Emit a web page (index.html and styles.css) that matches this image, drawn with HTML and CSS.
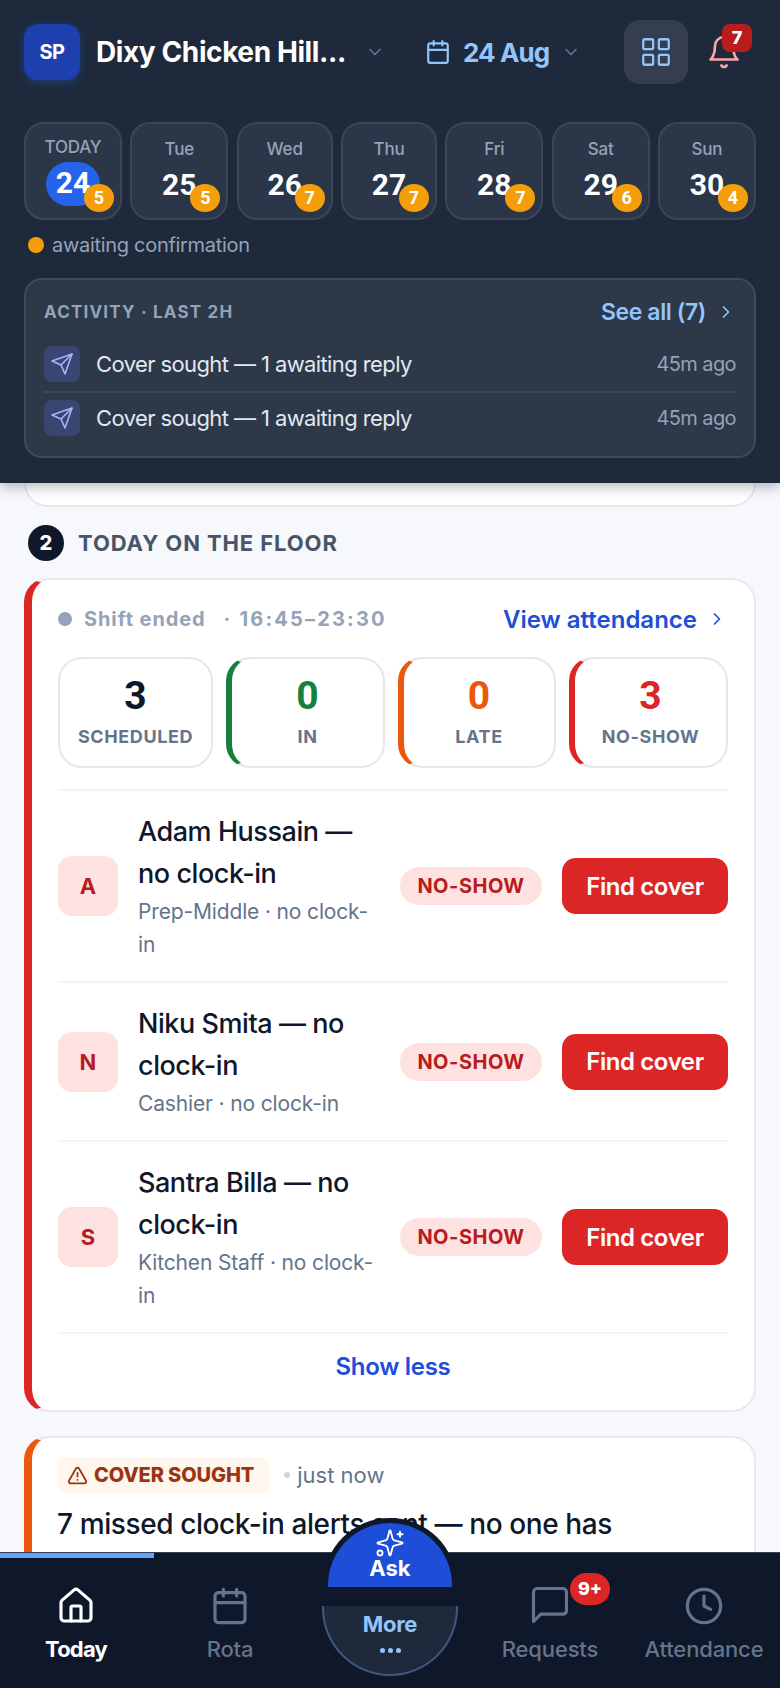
FILE: index.html
```html
<!DOCTYPE html>
<html lang="en">
<head>
    <meta charset="UTF-8">
    <meta name="viewport" content="width=device-width, initial-scale=1.0">
    <title>Today</title>
    <link rel="stylesheet" href="styles.css">
</head>
<body>
<div class="app">
    <header class="top">
        <div class="top-bar">
            <div class="logo">SP</div>
            <div class="site-name">Dixy Chicken Hill...</div>
            <svg class="chev chev-site" viewBox="0 0 24 24"><path d="m6 9 6 6 6-6"/></svg>
            <svg class="date-icon" viewBox="0 0 24 24"><path d="M8 2v4M16 2v4M3 10h18"/><rect x="3" y="4" width="18" height="18" rx="2"/></svg>
            <div class="date-label">24 Aug</div>
            <svg class="chev" viewBox="0 0 24 24"><path d="m6 9 6 6 6-6"/></svg>
            <div class="grid-btn">
                <svg viewBox="0 0 24 24"><rect x="3" y="3" width="7" height="7" rx="1"/><rect x="14" y="3" width="7" height="7" rx="1"/><rect x="14" y="14" width="7" height="7" rx="1"/><rect x="3" y="14" width="7" height="7" rx="1"/></svg>
            </div>
            <div class="bell">
                <svg viewBox="0 0 24 24"><path d="M6 8a6 6 0 0 1 12 0c0 7 3 9 3 9H3s3-2 3-9"/><path d="M10.3 21a1.94 1.94 0 0 0 3.4 0"/></svg>
                <span class="bell-count">7</span>
            </div>
        </div>

        <div class="week">
            <div class="day day-today"><span class="day-name">TODAY</span><span class="day-num">24</span><span class="day-badge">5</span></div>
            <div class="day"><span class="day-name">Tue</span><span class="day-num">25</span><span class="day-badge">5</span></div>
            <div class="day"><span class="day-name">Wed</span><span class="day-num">26</span><span class="day-badge">7</span></div>
            <div class="day"><span class="day-name">Thu</span><span class="day-num">27</span><span class="day-badge">7</span></div>
            <div class="day"><span class="day-name">Fri</span><span class="day-num">28</span><span class="day-badge">7</span></div>
            <div class="day"><span class="day-name">Sat</span><span class="day-num">29</span><span class="day-badge">6</span></div>
            <div class="day"><span class="day-name">Sun</span><span class="day-num">30</span><span class="day-badge">4</span></div>
        </div>

        <div class="legend"><span class="legend-dot"></span>awaiting confirmation</div>

        <section class="activity">
            <div class="activity-head">
                <span class="activity-title">ACTIVITY · LAST 2H</span>
                <span class="see-all">See all (7)</span>
                <svg class="see-chev" viewBox="0 0 24 24"><path d="m9 18 6-6-6-6"/></svg>
            </div>
            <div class="activity-row">
                <span class="activity-icon"><svg viewBox="0 0 24 24"><path d="m22 2-7 20-4-9-9-4Z"/><path d="M22 2 11 13"/></svg></span>
                <span class="activity-text">Cover sought — 1 awaiting reply</span>
                <span class="activity-time">45m ago</span>
            </div>
            <div class="activity-row">
                <span class="activity-icon"><svg viewBox="0 0 24 24"><path d="m22 2-7 20-4-9-9-4Z"/><path d="M22 2 11 13"/></svg></span>
                <span class="activity-text">Cover sought — 1 awaiting reply</span>
                <span class="activity-time">45m ago</span>
            </div>
        </section>
    </header>

    <main class="content">
        <div class="prev-card"></div>

        <div class="section-head">
            <span class="section-num">2</span>
            <h2>TODAY ON THE FLOOR</h2>
        </div>

        <section class="card card-red">
            <div class="shift-row">
                <span class="shift-dot"></span>
                <span class="shift-state">Shift ended</span>
                <span class="shift-time">· 16:45–23:30</span>
                <span class="view-link">View attendance</span>
                <svg class="view-chev" viewBox="0 0 24 24"><path d="m9 18 6-6-6-6"/></svg>
            </div>

            <div class="stats">
                <div class="stat"><b>3</b><span>SCHEDULED</span></div>
                <div class="stat stat-in"><b>0</b><span>IN</span></div>
                <div class="stat stat-late"><b>0</b><span>LATE</span></div>
                <div class="stat stat-noshow"><b>3</b><span>NO-SHOW</span></div>
            </div>

            <div class="person">
                <div class="avatar">A</div>
                <div class="person-info">
                    <div class="person-name">Adam Hussain — no clock-in</div>
                    <div class="person-sub">Prep-Middle · no clock-in</div>
                </div>
                <span class="pill">NO-SHOW</span>
                <button class="cover-btn">Find cover</button>
            </div>
            <div class="person">
                <div class="avatar">N</div>
                <div class="person-info">
                    <div class="person-name">Niku Smita — no clock-in</div>
                    <div class="person-sub">Cashier · no clock-in</div>
                </div>
                <span class="pill">NO-SHOW</span>
                <button class="cover-btn">Find cover</button>
            </div>
            <div class="person">
                <div class="avatar">S</div>
                <div class="person-info">
                    <div class="person-name">Santra Billa — no clock-in</div>
                    <div class="person-sub">Kitchen Staff · no clock-in</div>
                </div>
                <span class="pill">NO-SHOW</span>
                <button class="cover-btn">Find cover</button>
            </div>
            <div class="show-less">Show less</div>
        </section>

        <section class="card card-orange">
            <div class="alert-head">
                <span class="alert-tag">
                    <svg viewBox="0 0 24 24"><path d="m21.73 18-8-14a2 2 0 0 0-3.48 0l-8 14A2 2 0 0 0 4 21h16a2 2 0 0 0 1.73-3"/><path d="M12 9v4M12 17h.01"/></svg>
                    COVER SOUGHT
                </span>
                <span class="alert-dot"></span>
                <span class="alert-time">just now</span>
            </div>
            <p class="alert-text">7 missed clock-in alerts sent — no one has accepted yet. Check</p>
        </section>
    </main>

    <nav class="tabs">
        <div class="tab-progress"></div>
        <div class="tab tab-active">
            <svg viewBox="0 0 24 24"><path d="M15 21v-8a1 1 0 0 0-1-1h-4a1 1 0 0 0-1 1v8"/><path d="M3 10a2 2 0 0 1 .709-1.528l7-5.999a2 2 0 0 1 2.582 0l7 5.999A2 2 0 0 1 21 10v9a2 2 0 0 1-2 2H5a2 2 0 0 1-2-2z"/></svg>
            <span>Today</span>
        </div>
        <div class="tab">
            <svg viewBox="0 0 24 24"><path d="M8 2v4M16 2v4M3 10h18"/><rect x="3" y="4" width="18" height="18" rx="2"/></svg>
            <span>Rota</span>
        </div>
        <div class="more">
            <span>More</span>
            <i class="more-dots"></i>
        </div>
        <div class="tab">
            <div class="tab-icon">
                <svg viewBox="0 0 24 24"><path d="M21 15a2 2 0 0 1-2 2H7l-4 4V5a2 2 0 0 1 2-2h14a2 2 0 0 1 2 2z"/></svg>
                <span class="tab-badge">9+</span>
            </div>
            <span>Requests</span>
        </div>
        <div class="tab">
            <svg viewBox="0 0 24 24"><circle cx="12" cy="12" r="10"/><path d="M12 6v6l4 2"/></svg>
            <span>Attendance</span>
        </div>
        <div class="ask">
            <svg viewBox="0 0 24 24"><path d="M9.937 15.5A2 2 0 0 0 8.5 14.063l-6.135-1.582a.5.5 0 0 1 0-.962L8.5 9.936A2 2 0 0 0 9.937 8.5l1.582-6.135a.5.5 0 0 1 .963 0L14.063 8.5A2 2 0 0 0 15.5 9.937l6.135 1.581a.5.5 0 0 1 0 .964L15.5 14.063a2 2 0 0 0-1.437 1.437l-1.582 6.135a.5.5 0 0 1-.963 0z"/><path d="M20 3v4M22 5h-4"/><circle cx="4" cy="20" r="2"/></svg>
            <span>Ask</span>
        </div>
    </nav>
</div>
</body>
</html>
```

FILE: styles.css
```css
* {
    box-sizing: border-box;
}

html,
body {
    margin: 0;
    height: 100%;
}

body {
    background-color: #f6f8fc;
    font-family: Inter, "Noto Sans", sans-serif;
    color: #0f172a;
}

svg {
    fill: none;
    stroke: currentColor;
    stroke-width: 2;
    stroke-linecap: round;
    stroke-linejoin: round;
    display: block;
}

.app {
    display: flex;
    flex-direction: column;
    height: 1688px;
    overflow: hidden;
}

/* dark header */

.top {
    position: relative;
    z-index: 2;
    flex-shrink: 0;
    height: 483px;
    padding: 20px 24px 0;
    background-color: #1e293b;
    box-shadow: 0 4px 12px rgba(15, 23, 42, 0.3);
}

.top-bar {
    display: flex;
    align-items: center;
    height: 64px;
}

.logo {
    display: flex;
    align-items: center;
    justify-content: center;
    width: 56px;
    height: 56px;
    border-radius: 14px;
    background-color: #1e40af;
    box-shadow: 0 2px 8px rgba(37, 99, 235, 0.4);
    color: #fff;
    font-size: 20px;
    font-weight: 700;
    letter-spacing: -0.5px;
}

.site-name {
    margin-left: 16px;
    width: 260px;
    color: #fff;
    font-size: 28px;
    font-weight: 700;
    letter-spacing: -0.4px;
    white-space: nowrap;
}

.chev {
    width: 20px;
    height: 20px;
    color: #64748b;
}

.chev-site {
    margin-left: 9px;
}

.date-icon {
    margin-left: 40px;
    width: 26px;
    height: 26px;
    color: #93c5fd;
}

.date-label {
    margin: 0 12px 0 12px;
    color: #93c5fd;
    font-size: 26px;
    font-weight: 700;
    letter-spacing: -0.9px;
}

.grid-btn {
    display: flex;
    align-items: center;
    justify-content: center;
    margin-left: auto;
    width: 64px;
    height: 64px;
    border-radius: 16px;
    background-color: #343e50;
    color: #93c5fd;
}

.grid-btn svg {
    width: 34px;
    height: 34px;
    stroke-width: 1.6;
}

.bell {
    position: relative;
    width: 50px;
    margin-left: 18px;
    color: #fca5a5;
}

.bell svg {
    width: 36px;
    height: 36px;
    stroke-width: 1.8;
}

.bell-count {
    position: absolute;
    top: -10px;
    left: 16px;
    width: 30px;
    height: 28px;
    border-radius: 8px;
    background-color: #b91c1c;
    color: #fff;
    font-size: 18px;
    font-weight: 800;
    line-height: 28px;
    text-align: center;
}

.week {
    display: grid;
    grid-template-columns: 98px 98px 96px 96px 98px 98px 98px;
    gap: 8.33px;
    margin-top: 38px;
}

.day {
    position: relative;
    display: flex;
    flex-direction: column;
    align-items: center;
    height: 98px;
    padding-top: 13px;
    border: 2px solid #3b4657;
    border-radius: 20px;
    background-color: #2b3648;
}

.day-name {
    height: 24px;
    color: #94a3b8;
    font-size: 17px;
    font-weight: 500;
    line-height: 24px;
    letter-spacing: -0.2px;
}

.day-num {
    margin-top: 6px;
    color: #fff;
    font-family: Roboto, sans-serif;
    font-size: 30px;
    font-weight: 700;
    line-height: 36px;
}

.day-today {
    padding-top: 11px;
}

.day-today .day-num {
    margin-top: 3px;
    width: 54px;
    height: 44px;
    border-radius: 22px;
    background-color: #2563eb;
    line-height: 42px;
    text-align: center;
}

.day-badge {
    position: absolute;
    right: 6px;
    top: 60px;
    width: 30px;
    height: 28px;
    border-radius: 50%;
    background-color: #f59e0b;
    color: #fff;
    font-family: Roboto, sans-serif;
    font-size: 18px;
    font-weight: 700;
    line-height: 28px;
    text-align: center;
}

.legend {
    display: flex;
    align-items: center;
    gap: 8px;
    height: 28px;
    margin-top: 11px;
    padding-left: 4px;
    color: #94a3b8;
    font-size: 20px;
    letter-spacing: -0.3px;
}

.legend-dot {
    width: 16px;
    height: 16px;
    border-radius: 50%;
    background-color: #f59e0b;
}

.activity {
    margin-top: 19px;
    height: 180px;
    padding: 14px 18px 0;
    border: 2px solid #3e4a5c;
    border-radius: 18px;
    background-color: #2d3849;
}

.activity-head {
    display: flex;
    align-items: center;
    height: 36px;
    margin-bottom: 7px;
}

.activity-title {
    color: #94a3b8;
    font-size: 17px;
    font-weight: 700;
    letter-spacing: 1.2px;
}

.see-all {
    margin-left: auto;
    color: #93c5fd;
    font-size: 23px;
    font-weight: 600;
    letter-spacing: -0.4px;
}

.see-chev {
    width: 20px;
    height: 20px;
    margin-left: 10px;
    color: #93c5fd;
}

.activity-row {
    display: flex;
    align-items: center;
    height: 54px;
    padding-bottom: 1px;
}

.activity-row + .activity-row {
    height: 52px;
    border-top: 2px solid #3a4659;
    padding-bottom: 0;
}

.activity-icon {
    display: flex;
    align-items: center;
    justify-content: center;
    width: 36px;
    height: 36px;
    border-radius: 8px;
    background-color: #3a4672;
    color: #a5b4fc;
}

.activity-icon svg {
    width: 24px;
    height: 24px;
    stroke-width: 1.6;
}

.activity-text {
    margin-left: 16px;
    color: #e2e8f0;
    font-size: 22px;
    letter-spacing: -0.6px;
}

.activity-time {
    margin-left: auto;
    color: #94a3b8;
    font-size: 20px;
    letter-spacing: -0.6px;
}

/* scrolling content */

.content {
    flex: 1;
    min-height: 0;
    overflow: hidden;
    padding: 0 24px;
}

.prev-card {
    height: 24px;
    border: 2px solid #e5e9f0;
    border-top: none;
    border-radius: 0 0 24px 24px;
    background-color: #fff;
}

.section-head {
    display: flex;
    align-items: center;
    gap: 14px;
    margin-top: 18px;
    padding-left: 4px;
}

.section-num {
    width: 36px;
    height: 36px;
    border-radius: 50%;
    background-color: #0f172a;
    color: #fff;
    font-size: 20px;
    font-weight: 800;
    line-height: 36px;
    text-align: center;
}

.section-head h2 {
    margin: 0;
    color: #475569;
    font-size: 22px;
    font-weight: 700;
    letter-spacing: 0.9px;
}

.card {
    border: 2px solid #e5e9f0;
    border-left: 8px solid #dc2626;
    border-radius: 24px;
    background-color: #fff;
}

.card-red {
    height: 834px;
    margin-top: 17px;
    padding: 22px 26px 0;
}

.card-orange {
    margin-top: 24px;
    padding: 19px 26px 0 25px;
    border-left-color: #ea580c;
}

.shift-row {
    display: flex;
    align-items: center;
    height: 34px;
}

.shift-dot {
    width: 14px;
    height: 14px;
    border-radius: 50%;
    background-color: #94a3b8;
}

.shift-state {
    margin-left: 12px;
    color: #94a3b8;
    font-size: 20px;
    font-weight: 700;
    letter-spacing: 0.9px;
}

.shift-time {
    margin-left: 18px;
    color: #94a3b8;
    font-size: 20px;
    font-weight: 700;
    letter-spacing: 2.2px;
}

.view-link {
    margin-left: auto;
    color: #1d4ed8;
    font-size: 24px;
    font-weight: 600;
    letter-spacing: 0;
}

.view-chev {
    width: 20px;
    height: 20px;
    margin-left: 10px;
    margin-right: 1px;
    color: #1d4ed8;
}

.stats {
    display: grid;
    grid-template-columns: 155px 159px 158px 159px;
    gap: 13px;
    margin-top: 21px;
    margin-bottom: 21px;
}

.stat {
    display: flex;
    flex-direction: column;
    align-items: center;
    height: 111px;
    padding-top: 14px;
    border: 2px solid #e5e7eb;
    border-radius: 24px;
}

.stat b {
    font-family: Roboto, sans-serif;
    font-size: 39px;
    font-weight: 700;
    line-height: 46px;
}

.stat span {
    margin-top: 7px;
    color: #64748b;
    font-size: 18px;
    font-weight: 700;
    letter-spacing: 0.6px;
}

.stat-in {
    border-left: 6px solid #15803d;
}

.stat-in b {
    color: #15803d;
}

.stat-late {
    border-left: 6px solid #ea580c;
}

.stat-late b {
    color: #ea580c;
}

.stat-noshow {
    border-left: 6px solid #dc2626;
}

.stat-noshow b {
    color: #dc2626;
}

.person {
    display: flex;
    align-items: center;
    padding: 20px 0;
    border-top: 2px solid #f1f4f8;
}

.avatar {
    flex-shrink: 0;
    width: 60px;
    height: 60px;
    border-radius: 14px;
    background-color: #fee2e2;
    color: #b91c1c;
    font-size: 22px;
    font-weight: 700;
    line-height: 60px;
    text-align: center;
}

.person-info {
    width: 244px;
    margin-left: 20px;
}

.person-name {
    font-size: 27px;
    font-weight: 500;
    line-height: 42px;
    letter-spacing: -0.45px;
}

.person-sub {
    color: #64748b;
    font-size: 21px;
    line-height: 33px;
    letter-spacing: -0.15px;
}

.pill {
    flex-shrink: 0;
    margin-left: auto;
    width: 142px;
    height: 38px;
    border-radius: 19px;
    background-color: #fee2e2;
    color: #b91c1c;
    font-size: 20px;
    font-weight: 700;
    line-height: 38px;
    letter-spacing: 0.5px;
    text-align: center;
}

.cover-btn {
    flex-shrink: 0;
    margin-left: 20px;
    width: 166px;
    height: 56px;
    border: none;
    border-radius: 14px;
    background-color: #dc2626;
    color: #fff;
    font-family: inherit;
    font-size: 24px;
    font-weight: 600;
    letter-spacing: -0.4px;
}

.show-less {
    height: 78px;
    border-top: 2px solid #f1f4f8;
    color: #1d4ed8;
    font-size: 24px;
    font-weight: 600;
    line-height: 66px;
    letter-spacing: -0.3px;
    text-align: center;
}

.alert-head {
    display: flex;
    align-items: center;
}

.alert-tag {
    display: flex;
    align-items: center;
    gap: 6px;
    height: 36px;
    padding: 0 15px 0 10px;
    border-radius: 8px;
    background-color: #fff7ed;
    color: #9a3412;
    font-size: 20px;
    font-weight: 800;
    letter-spacing: -0.1px;
}

.alert-tag svg {
    width: 21px;
    height: 21px;
}

.alert-dot {
    width: 6px;
    height: 6px;
    margin-left: 15px;
    border-radius: 50%;
    background-color: #cbd5e1;
}

.alert-time {
    margin-left: 7px;
    color: #64748b;
    font-size: 22px;
    letter-spacing: 0;
}

.alert-text {
    margin: 12px 0 0;
    max-width: 610px;
    font-size: 28px;
    font-weight: 500;
    line-height: 39px;
    letter-spacing: -0.4px;
}

/* bottom nav */

.tabs {
    position: relative;
    z-index: 3;
    flex-shrink: 0;
    display: grid;
    grid-template-columns: 152px 156px 1fr 156px 152px;
    height: 136px;
    border-top: 1px solid #334155;
    background-color: #0f172a;
}

.tab-progress {
    position: absolute;
    top: 0;
    left: 0;
    width: 154px;
    height: 5px;
    background-color: #60a5fa;
}

.tab {
    display: flex;
    flex-direction: column;
    align-items: center;
    padding-top: 33px;
    color: #64748b;
}

.tab svg {
    width: 40px;
    height: 40px;
    stroke-width: 1.9;
}

.tab > span {
    margin-top: 8px;
    font-size: 22px;
    font-weight: 500;
    line-height: 30px;
    letter-spacing: -0.15px;
}

.tab-active {
    color: #fff;
}

.tab-active > span {
    font-weight: 700;
    letter-spacing: -0.8px;
}

.tab-icon {
    position: relative;
    height: 40px;
}

.tab-icon svg {
    width: 44px;
    height: 44px;
    margin-top: -3px;
    stroke-width: 1.7;
}

.tab-badge {
    position: absolute;
    top: -13px;
    left: 42px;
    width: 40px;
    height: 32px;
    border-radius: 16px;
    background-color: #dc2626;
    color: #fff;
    font-size: 18px;
    font-weight: 800;
    line-height: 32px;
    text-align: center;
}

.more {
    display: flex;
    flex-direction: column;
    align-items: center;
    justify-self: center;
    width: 136px;
    height: 70px;
    margin-top: 53px;
    padding-top: 3px;
    border: 2px solid #3f5a80;
    border-top: none;
    border-radius: 0 0 68px 68px;
    background-color: #1e293b;
    color: #93c5fd;
    font-size: 22px;
    font-weight: 700;
    line-height: 30px;
    letter-spacing: -0.3px;
}

.more-dots {
    position: relative;
    width: 5px;
    height: 5px;
    margin-top: 9px;
    border-radius: 50%;
    background-color: #93c5fd;
    box-shadow: -8px 0 0 #93c5fd, 8px 0 0 #93c5fd;
}

.ask {
    position: absolute;
    top: -30px;
    left: 328px;
    display: flex;
    flex-direction: column;
    align-items: center;
    width: 124px;
    height: 64px;
    padding-top: 5px;
    border-radius: 62px 62px 0 0;
    background-color: #1d4ed8;
    box-shadow: 0 0 0 5px #0f172a;
    color: #fff;
}

.ask svg {
    width: 30px;
    height: 30px;
    stroke-width: 1.5;
}

.ask span {
    margin-top: -2px;
    font-size: 22px;
    font-weight: 700;
    line-height: 24px;
}
```
